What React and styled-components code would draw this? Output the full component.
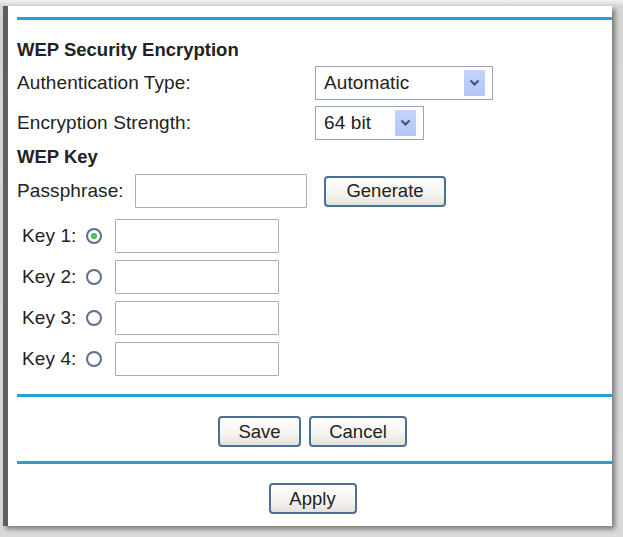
import React from "react";
import styled, { createGlobalStyle } from "styled-components";

const Global = createGlobalStyle`
  html, body {
    margin: 0;
    padding: 0;
    background: #d9d9d9;
  }
  body {
    font-family: "Liberation Sans", Arial, sans-serif;
    color: #222;
  }
`;

const Frame = styled.div`
  width: 623px;
  height: 537px;
  box-sizing: border-box;
  padding: 6px 0 0 3px;
  background: linear-gradient(#f2f2f2, #d6d6d6 6px, #dadada);
  overflow: hidden;
`;

const Panel = styled.div`
  width: 609px;
  height: 520px;
  box-sizing: border-box;
  background: #fff;
  border-left: 5px solid #5f5f5f;
  box-shadow: 3px 3px 5px rgba(0, 0, 0, 0.45);
  padding: 11px 0 0 9px;
  font-size: 19px;
  letter-spacing: 0.1px;
`;

const Divider = styled.div`
  height: 3px;
  background: #2b9fd8;
  margin: ${(p) => p.$m || "0"};
`;

const Title = styled.div`
  font-weight: bold;
  font-size: 18.5px;
  letter-spacing: 0;
  line-height: 22px;
  margin-top: ${(p) => p.$top}px;
`;

const FieldRow = styled.div`
  display: flex;
  align-items: center;
  height: 34px;
  margin-top: ${(p) => p.$top}px;
`;

const Label = styled.span`
  width: ${(p) => (p.$w ? `${p.$w}px` : "auto")};
  padding-left: ${(p) => p.$indent || 0}px;
  flex-shrink: 0;
`;

const SelectBox = styled.div`
  width: ${(p) => p.$w}px;
  height: 34px;
  box-sizing: border-box;
  border: 1px solid #9aa7b8;
  display: flex;
  align-items: center;
  justify-content: space-between;
  padding: 0 7px 0 8px;
  background: #fff;
`;

const Arrow = styled.span`
  width: 21px;
  height: 26px;
  background: linear-gradient(#c6d4fa, #b2c4f3);
  display: flex;
  align-items: center;
  justify-content: center;
`;

const TextInput = styled.div`
  width: ${(p) => p.$w}px;
  height: ${(p) => p.$h || 34}px;
  box-sizing: border-box;
  border: 1px solid #a3adbb;
  border-radius: 1px;
  background: #fff;
  margin-left: ${(p) => p.$ml || 0}px;
`;

const Button = styled.button`
  font-family: "Liberation Sans", Arial, sans-serif;
  font-size: 18.5px;
  color: #222;
  width: ${(p) => p.$w}px;
  height: 31px;
  box-sizing: border-box;
  border: 2px solid #4d6f90;
  border-radius: 4px;
  background: linear-gradient(#ffffff, #f4f3ee 60%, #e3e1d8);
  padding: 0;
  margin-left: ${(p) => p.$ml || 0}px;
`;

const ButtonBar = styled.div`
  display: flex;
  justify-content: center;
  gap: 8px;
  padding-right: 4px;
  margin: ${(p) => p.$m};
`;

const Radio = styled.span`
  width: 16px;
  height: 16px;
  box-sizing: border-box;
  border-radius: 50%;
  border: 2px solid #5f7090;
  background: radial-gradient(#ffffff 55%, #e4e6ea);
  display: inline-flex;
  align-items: center;
  justify-content: center;
  margin-left: 10px;
  flex-shrink: 0;
  &::after {
    content: "";
    width: 6px;
    height: 6px;
    border-radius: 50%;
    background: ${(p) => (p.$on ? "radial-gradient(#6ad86a, #1f9f2a)" : "transparent")};
  }
`;

function Chevron() {
  return (
    <svg width="11" height="8" viewBox="0 0 11 8">
      <path d="M1.5 1.5 L5.5 5.5 L9.5 1.5" fill="none" stroke="#3f5580" strokeWidth="2.2" />
    </svg>
  );
}

function Select({ value, width }) {
  return (
    <SelectBox $w={width}>
      <span>{value}</span>
      <Arrow>
        <Chevron />
      </Arrow>
    </SelectBox>
  );
}

const keys = [1, 2, 3, 4];

export default function App() {
  return (
    <Frame>
      <Global />
      <Panel>
        <Divider />
        <Title $top={19}>WEP Security Encryption</Title>
        <FieldRow $top={5}>
          <Label $w={298}>Authentication Type:</Label>
          <Select value="Automatic" width={178} />
        </FieldRow>
        <FieldRow $top={6}>
          <Label $w={298}>Encryption Strength:</Label>
          <Select value="64 bit" width={109} />
        </FieldRow>
        <Title $top={6}>WEP Key</Title>
        <FieldRow $top={6}>
          <Label $w={118}>Passphrase:</Label>
          <TextInput $w={172} />
          <Button $w={122} $ml={17}>Generate</Button>
        </FieldRow>
        {keys.map((k) => (
          <FieldRow key={k} $top={k === 1 ? 11 : 7}>
            <Label $indent={5}>Key {k}:</Label>
            <Radio $on={k === 1} />
            <TextInput $w={164} $ml={13} />
          </FieldRow>
        ))}
        <Divider $m="18px 0 0 0" />
        <ButtonBar $m="19px 0 0 0">
          <Button $w={83}>Save</Button>
          <Button $w={98}>Cancel</Button>
        </ButtonBar>
        <Divider $m="14px 0 0 0" />
        <ButtonBar $m="19px 0 0 0">
          <Button $w={88}>Apply</Button>
        </ButtonBar>
      </Panel>
    </Frame>
  );
}
